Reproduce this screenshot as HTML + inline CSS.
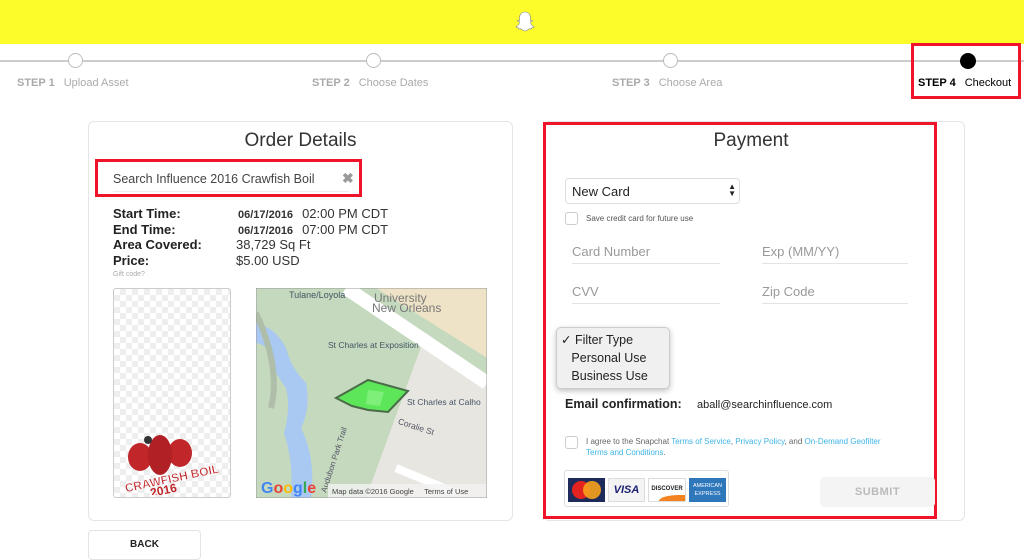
<!DOCTYPE html>
<html><head><style>
*{margin:0;padding:0;box-sizing:border-box}
body{width:1024px;height:543px;overflow:hidden;background:#fff;font-family:"Liberation Sans",sans-serif;position:relative;color:#222}
.a{position:absolute}
.top{left:0;top:0;width:1024px;height:44px;background:#fdfc2b}
.line{left:0;top:60px;width:1024px;height:2px;background:#ccc}
.c{width:15px;height:15px;border-radius:50%;border:1.5px solid #bbb;background:#fff;top:53px}
.st{top:77px;font-size:11px;color:#aaa}
.st b{margin-right:9px}
.card{border:1px solid #e5e5e5;border-radius:6px}
.red{border:3px solid #f0142a}
.lab{font-size:13px;font-weight:bold;left:113px;line-height:15.5px}
.in{font-size:13px;color:#999;border-bottom:1px solid #e3e3e3;padding-bottom:4px}
.cb{width:13px;height:13px;border:1px solid #ccc;border-radius:3px;background:#fff}
.lk{color:#3db3e6}
.v{font-size:13px;color:#333;left:238px}
.v b{font-size:11px;margin-right:9px}
</style></head><body>
<div class="a top"></div>
<svg class="a" style="left:515px;top:11px" width="20" height="22" viewBox="0 0 20 22"><path d="M10 1C5.5 1 4.3 4.5 4.5 8L4.6 9.5 2.7 9.2 2.5 10l2.2 1.2C4 13.5 2.6 15 1 15.8l.3.6 2 .4.4 1.2 2.2-.2C7 18.5 8 20 10 20s3-1.5 4.1-2.2l2.2.2.4-1.2 2-.4.3-.6C17.4 15 16 13.5 15.3 11.2l2.2-1.2-.2-.8-1.9.3.1-1.5C15.7 4.5 14.5 1 10 1z" fill="#fff" stroke="#888" stroke-width=".6"/></svg>
<div class="a line"></div>
<div class="a c" style="left:68px"></div>
<div class="a c" style="left:366px"></div>
<div class="a c" style="left:663px"></div>
<div class="a" style="left:960px;top:53px;width:16px;height:16px;border-radius:50%;background:#000"></div>
<div class="a st" style="left:17px"><b>STEP 1</b>Upload Asset</div>
<div class="a st" style="left:312px"><b>STEP 2</b>Choose Dates</div>
<div class="a st" style="left:612px"><b>STEP 3</b>Choose Area</div>
<div class="a st" style="left:918px;color:#000"><b>STEP 4</b>Checkout</div>
<div class="a red" style="left:911px;top:43px;width:110px;height:56px"></div>

<div class="a card" style="left:88px;top:121px;width:425px;height:400px"></div>
<div class="a" style="left:88px;top:130px;width:425px;text-align:center;font-size:19px;color:#333">Order Details</div>
<div class="a red" style="left:95px;top:159px;width:267px;height:38px"></div>
<div class="a" style="left:113px;top:172px;font-size:12.5px;color:#444;width:236px;border-bottom:1px solid #eee;padding-bottom:5px">Search Influence 2016 Crawfish Boil</div>
<div class="a" style="left:342px;top:170px;font-size:14px;color:#999;font-weight:bold">✖</div>
<div class="a lab" style="top:206px">Start Time:<br>End Time:<br>Area Covered:<br>Price:</div>
<div class="a v" style="top:206px"><b>06/17/2016</b>02:00 PM CDT</div>
<div class="a v" style="top:222px"><b>06/17/2016</b>07:00 PM CDT</div>
<div class="a v" style="top:237px;left:236px">38,729 Sq Ft</div>
<div class="a v" style="top:253px;left:236px">$5.00 USD</div>
<div class="a" style="left:113px;top:271px;font-size:7px;color:#aaa">Gift code?</div>
<div class="a" style="left:113px;top:288px;width:118px;height:210px;border:1px solid #ccc;border-radius:3px;background-color:#fff;background-image:linear-gradient(45deg,#eee 25%,transparent 25%,transparent 75%,#eee 75%),linear-gradient(45deg,#eee 25%,transparent 25%,transparent 75%,#eee 75%);background-size:12px 12px;background-position:0 0,6px 6px"></div>
<svg class="a" style="left:120px;top:425px" width="105" height="70" viewBox="0 0 105 70">
<ellipse cx="20" cy="32" rx="12" ry="14" fill="#c0262a"/>
<ellipse cx="60" cy="28" rx="12" ry="14" fill="#c0262a"/>
<ellipse cx="40" cy="30" rx="12" ry="20" fill="#b12024"/>
<circle cx="28" cy="15" r="4" fill="#333"/>
<text x="4" y="60" font-size="12" font-weight="bold" fill="#c0262a" stroke="#fff" stroke-width=".5" font-family="Liberation Sans" transform="rotate(-12 40 55)">CRAWFISH BOIL</text>
<text x="30" y="70" font-size="12" font-weight="bold" fill="#c0262a" font-family="Liberation Sans" transform="rotate(-12 40 65)">2016</text>
</svg>
<svg class="a" style="left:256px;top:288px" width="231" height="210" viewBox="0 0 231 210">
<rect width="231" height="210" fill="#c4d9bd"/>
<polygon points="120,0 231,0 231,70" fill="#eee3c6"/>
<polygon points="170,45 231,90 231,210 110,210" fill="#e8e6e0"/>
<path d="M90 0 L231 95" stroke="#fff" stroke-width="14"/>
<path d="M0 35 Q20 40 30 60 Q35 80 50 95 Q55 120 45 140 Q60 170 55 210 L35 210 Q38 175 28 145 Q35 120 30 100 Q15 80 10 60 Q5 55 0 55Z" fill="#a9c8f2"/>
<path d="M0 25 Q25 80 15 120" fill="none" stroke="#aebea8" stroke-width="6"/>
<polygon points="80,110 112,92 152,103 132,124 112,122 96,118" fill="#5de65a" stroke="#4a6b48" stroke-width="2"/>
<polygon points="112,102 128,104 124,118 110,116" fill="#7ef07a"/>
<path d="M200 205 L140 180" stroke="#fff" stroke-width="8"/>
<text x="33" y="10" font-size="9" fill="#456" font-family="Liberation Sans">Tulane/Loyola</text>
<text x="118" y="14" font-size="12" fill="#777" font-family="Liberation Sans">University</text>
<text x="116" y="24" font-size="12" fill="#777" font-family="Liberation Sans">New Orleans</text>
<text x="72" y="60" font-size="8.5" fill="#456" font-family="Liberation Sans">St Charles at Exposition</text>
<text x="151" y="117" font-size="8.5" fill="#456" font-family="Liberation Sans">St Charles at Calho</text>
<text x="140" y="145" font-size="8.5" fill="#556" font-family="Liberation Sans" transform="rotate(18 170 145)">Coralie St</text>
<text x="70" y="205" font-size="8" fill="#556" font-family="Liberation Sans" transform="rotate(-72 70 205)">Audubon Park Trail</text>
<text x="5" y="205" font-size="16" font-weight="bold" fill="#4285f4" font-family="Liberation Sans">G<tspan fill="#ea4335">o</tspan><tspan fill="#fbbc05">o</tspan><tspan fill="#4285f4">g</tspan><tspan fill="#34a853">l</tspan><tspan fill="#ea4335">e</tspan></text>
<rect x="72" y="196" width="159" height="14" fill="#f2f2f2" opacity=".8"/>
<text x="76" y="206" font-size="7.5" fill="#444" font-family="Liberation Sans">Map data ©2016 Google &#160;&#160;&#160; Terms of Use</text>
<rect width="231" height="210" fill="none" stroke="#999"/>
</svg>
<div class="a" style="left:88px;top:530px;width:113px;height:30px;border:1px solid #e3e3e3;border-radius:4px;text-align:center;font-size:10px;font-weight:bold;padding-top:8px">BACK</div>

<div class="a card" style="left:543px;top:121px;width:422px;height:400px"></div>
<div class="a red" style="left:543px;top:122px;width:394px;height:397px"></div>
<div class="a" style="left:543px;top:130px;width:416px;text-align:center;font-size:19px;color:#333">Payment</div>
<div class="a" style="left:565px;top:178px;width:175px;height:26px;border:1px solid #ddd;border-radius:4px;font-size:13px;padding:5px 6px;color:#222">New Card<span style="position:absolute;right:3px;top:4px;font-size:8px;line-height:7px">▲<br>▼</span></div>
<div class="a cb" style="left:565px;top:212px"></div>
<div class="a" style="left:586px;top:214px;font-size:8px;color:#555">Save credit card for future use</div>
<div class="a in" style="left:572px;top:244px;width:148px">Card Number</div>
<div class="a in" style="left:762px;top:244px;width:146px">Exp (MM/YY)</div>
<div class="a in" style="left:572px;top:284px;width:148px">CVV</div>
<div class="a in" style="left:762px;top:284px;width:146px">Zip Code</div>
<div class="a" style="left:556px;top:327px;width:114px;height:62px;background:#f0f0f0;border:1px solid #ccc;border-radius:5px;box-shadow:0 2px 6px rgba(0,0,0,.25);font-size:12.5px;line-height:18px;padding:3px 0 0 4px;color:#222">✓ Filter Type<br>&nbsp;&nbsp;&nbsp;Personal Use<br>&nbsp;&nbsp;&nbsp;Business Use</div>
<div class="a" style="left:565px;top:397px;font-size:12.5px;font-weight:bold;color:#222">Email confirmation:</div>
<div class="a" style="left:697px;top:399px;font-size:11px;color:#222">aball@searchinfluence.com</div>
<div class="a cb" style="left:565px;top:436px"></div>
<div class="a" style="left:586px;top:436px;font-size:8px;line-height:11px;color:#666">I agree to the Snapchat <span class="lk">Terms of Service</span>, <span class="lk">Privacy Policy</span>, and <span class="lk">On-Demand Geofilter</span><br><span class="lk">Terms and Conditions</span>.</div>
<div class="a" style="left:564px;top:470px;width:165px;height:37px;border:1px solid #ddd;border-radius:3px"></div>
<div class="a" style="left:568px;top:478px;width:37px;height:24px;background:#1d2a5a"><div class="a" style="left:4px;top:3px;width:18px;height:18px;border-radius:50%;background:#e3231f"></div><div class="a" style="left:15px;top:3px;width:18px;height:18px;border-radius:50%;background:#f7a21b;opacity:.9"></div></div>
<div class="a" style="left:608px;top:478px;width:37px;height:24px;background:#f4f4f4;border:1px solid #ddd;color:#1a1f71;font-weight:bold;font-style:italic;font-size:11px;text-align:center;line-height:22px">VISA</div>
<div class="a" style="left:648px;top:478px;width:38px;height:24px;background:#fff;border:1px solid #ddd;font-size:6px;font-weight:bold;text-align:center;line-height:20px;overflow:hidden">DISCOVER<div class="a" style="left:10px;top:16px;width:40px;height:12px;background:#f58220;border-radius:50% 0 0 0"></div></div>
<div class="a" style="left:689px;top:478px;width:37px;height:24px;background:#2e77bb;color:#fff;font-size:5.5px;text-align:center;line-height:8px;padding-top:4px">AMERICAN<br>EXPRESS</div>
<div class="a" style="left:820px;top:477px;width:115px;height:30px;background:#f4f4f4;border-radius:4px;color:#bbb;font-weight:bold;font-size:11px;text-align:center;line-height:30px;letter-spacing:.5px">SUBMIT</div>
</body></html>
